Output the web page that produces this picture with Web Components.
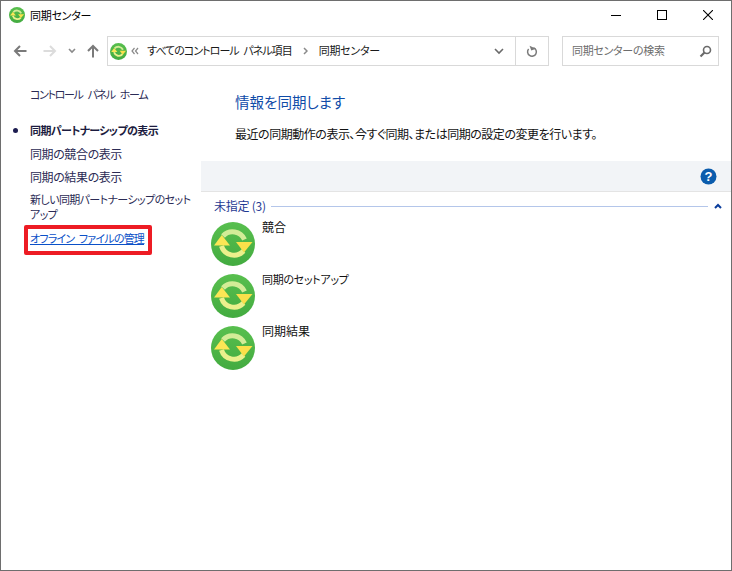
<!DOCTYPE html>
<html lang="ja">
<head>
<meta charset="utf-8">
<title>同期センター</title>
<style>
  html, body { margin: 0; height: 100%; background: #fff; overflow: hidden; }
  body { font: 12px "Noto Sans CJK JP", "Noto Sans", sans-serif; font-feature-settings: "palt"; color: #1a1a1a; }
</style>
</head>
<body>
<sync-window>
  <title-bar slot="title">同期センター</title-bar>
  <nav-bar slot="nav"></nav-bar>
  <side-panel slot="side">
    <side-link kind="home">コントロール パネル ホーム</side-link>
    <side-link kind="current">同期パートナーシップの表示</side-link>
    <side-link kind="mixed">同期の競合の表示</side-link>
    <side-link kind="mixed">同期の結果の表示</side-link>
    <side-link kind="long">新しい同期パートナーシップのセットアップ</side-link>
    <side-link kind="marked">オフライン ファイルの管理</side-link>
  </side-panel>
  <content-pane slot="main">
    <group-header>未指定 (3)</group-header>
    <sync-item>競合</sync-item>
    <sync-item tight>同期のセットアップ</sync-item>
    <sync-item>同期結果</sync-item>
  </content-pane>
</sync-window>

<script>
// small helper so each class stays short
function shadow(el, html) {
  el.attachShadow({ mode: 'open' }).innerHTML = html
}

let iconCount = 0

class SyncIcon extends HTMLElement {
  constructor() {
    super()
    const id = 'g' + (++iconCount)
    shadow(this, `
      <style>
        :host { display: block; width: var(--size, 16px); height: var(--size, 16px); flex: none; }
        svg { display: block; width: 100%; height: 100%; }
      </style>
      <svg viewBox="0 0 44 44">
        <defs>
          <linearGradient id="${id}" x1="0" y1="0" x2="0" y2="1">
            <stop offset="0" stop-color="#58bf4e"/>
            <stop offset="1" stop-color="#43ab40"/>
          </linearGradient>
        </defs>
        <circle cx="22" cy="22" r="22" fill="url(#${id})"/>
        <path d="M12 14 A13 13 0 0 1 33.5 17.5" fill="none" stroke="#d3ec97" stroke-width="5"/>
        <path d="M32.5 29 A13 13 0 0 1 10.5 24" fill="none" stroke="#ebf08c" stroke-width="5"/>
        <path d="M3 23.5 L10.8 13 L19 23.5 Z" fill="#fbe655"/>
        <path d="M25 20 L41.5 20 L33 30.5 Z" fill="#fbe04a"/>
      </svg>`)
  }
}
customElements.define('sync-icon', SyncIcon)

class SyncWindow extends HTMLElement {
  constructor() {
    super()
    shadow(this, `
      <style>
        :host { display: flex; flex-direction: column; box-sizing: border-box; width: 732px; height: 571px; border: 1px solid #6e6e6e; background: #fff; }
        .body { flex: 1; display: flex; min-height: 0; }
      </style>
      <slot name="title"></slot>
      <slot name="nav"></slot>
      <div class="body"><slot name="side"></slot><slot name="main"></slot></div>`)
  }
}
customElements.define('sync-window', SyncWindow)

class TitleBar extends HTMLElement {
  constructor() {
    super()
    shadow(this, `
      <style>
        :host { display: flex; align-items: center; height: 28px; padding-left: 8px; color: #000; }
        sync-icon { --size: 16px; margin-right: 5px; }
        .text { flex: 1; font-size: 11px; letter-spacing: -.25px; }
        .btn { width: 46px; height: 28px; display: flex; align-items: center; justify-content: center; }
        svg { display: block; }
      </style>
      <sync-icon></sync-icon>
      <span class="text"><slot></slot></span>
      <span class="btn"><svg width="10" height="10"><path d="M0 5.5H10" stroke="#000"/></svg></span>
      <span class="btn"><svg width="10" height="10"><rect x=".5" y=".5" width="9" height="9" fill="none" stroke="#000"/></svg></span>
      <span class="btn"><svg width="10" height="10"><path d="M0 0L10 10M10 0L0 10" stroke="#000" stroke-width="1.1"/></svg></span>`)
  }
}
customElements.define('title-bar', TitleBar)

class NavBar extends HTMLElement {
  constructor() {
    super()
    shadow(this, `
      <style>
        :host { display: flex; align-items: flex-start; height: 36px; margin-top: 7px; color: #1a1a1a; }
        svg { display: block; flex: none; }
        .arrows { display: flex; align-items: center; height: 30px; width: 106px; flex: none; }
        .arrows span { display: flex; justify-content: center; }
        .addr, .search { display: flex; align-items: center; box-sizing: border-box; height: 30px; border: 1px solid #d9d9d9; }
        .addr { width: 442px; flex: none; padding-left: 2px; }
        .addr sync-icon { --size: 17px; margin-right: 4px; }
        .path { flex: 1; display: flex; align-items: center; white-space: nowrap; padding: 0 0 2px 8px; font-size: 11px; }
        .path span:first-child { letter-spacing: -.95px; word-spacing: 3px; }
        .path span:last-child { letter-spacing: -.25px; }
        .path svg { margin: 2px 11px 0 11px; }
        .drop { width: 33px; height: 28px; display: flex; align-items: center; justify-content: center; }
        .refresh { width: 32px; height: 28px; border-left: 1px solid #d9d9d9; display: flex; align-items: center; justify-content: center; }
        .search { width: 157px; flex: none; margin-left: 13px; padding: 0 6px 0 9px; color: #6d6d6d; font-size: 11px; letter-spacing: -.3px; }
        .search span { flex: 1; padding-bottom: 2px; }
      </style>
      <div class="arrows">
        <span style="width:38px"><svg width="14" height="12"><path d="M7 1L2 6L7 11M2 6H13.5" fill="none" stroke="#7a7a7a" stroke-width="2"/></svg></span>
        <span style="width:22px"><svg width="14" height="12"><path d="M7 1L12 6L7 11M12 6H.5" fill="none" stroke="#dcdcdc" stroke-width="2"/></svg></span>
        <span style="width:22px"><svg width="8" height="6"><path d="M1 1L4 4L7 1" fill="none" stroke="#8a8a8a" stroke-width="1.6"/></svg></span>
        <span style="width:20px"><svg width="12" height="14"><path d="M1 7L6 2L11 7M6 2V13.5" fill="none" stroke="#7a7a7a" stroke-width="2"/></svg></span>
      </div>
      <div class="addr">
        <sync-icon></sync-icon>
        <svg width="8" height="8"><path d="M3.5 1L1 4L3.5 7M7 1L4.5 4L7 7" fill="none" stroke="#8a8a8a" stroke-width="1.2"/></svg>
        <div class="path">
          <span>すべてのコントロール パネル項目</span>
          <svg width="5" height="8"><path d="M1 1L4 4L1 7" fill="none" stroke="#8a8a8a" stroke-width="1.5"/></svg>
          <span>同期センター</span>
        </div>
        <span class="drop"><svg width="10" height="7"><path d="M1 1L5 5L9 1" fill="none" stroke="#6a6a6a" stroke-width="1.6"/></svg></span>
        <span class="refresh"><svg width="12" height="13" viewBox="0 0 12 13"><path d="M7.5 2.7A4.4 4.4 0 1 1 2.6 4" fill="none" stroke="#7a7a7a" stroke-width="1.5"/><path d="M4.5 0V5H9.5Z" fill="#7a7a7a" transform="rotate(-20 6 3)"/></svg></span>
      </div>
      <div class="search">
        <span>同期センターの検索</span>
        <svg width="13" height="13"><circle cx="8" cy="5" r="3.5" fill="none" stroke="#6a6a6a" stroke-width="1.6"/><path d="M5.5 7.5L1.5 11.5" stroke="#6a6a6a" stroke-width="2.2"/></svg>
      </div>`)
  }
}
customElements.define('nav-bar', NavBar)

class SidePanel extends HTMLElement {
  constructor() {
    super()
    shadow(this, `
      <style>
        :host { display: flex; flex-direction: column; box-sizing: border-box; width: 200px; flex: none; padding: 11px 8px 0 29px; }
      </style>
      <slot></slot>`)
  }
}
customElements.define('side-panel', SidePanel)

class SideLink extends HTMLElement {
  constructor() {
    super()
    shadow(this, `
      <style>
        :host { display: block; position: relative; color: #2b2b55; line-height: 15px; padding: 4px 0; font-size: 11px; }
        :host([kind="home"]) { margin-bottom: 13px; letter-spacing: -1.35px; word-spacing: 4px; }
        :host([kind="current"]) { font-weight: 700; color: #1c1c40; letter-spacing: -.6px; }
        :host([kind="current"])::before { content: ""; position: absolute; left: -17px; top: 9px; width: 5px; height: 5px; border-radius: 50%; background: #1c1c50; }
        :host([kind="mixed"]) { font-size: 12px; letter-spacing: -.4px; margin-bottom: -.5px; }
        :host([kind="long"]) { letter-spacing: -.6px; margin-top: 1px; }
        :host([kind="marked"]) { color: #0a50c8; text-decoration: underline; white-space: nowrap; letter-spacing: -.8px; word-spacing: 3px; margin-top: 1px; }
        :host([kind="marked"])::after { content: ""; position: absolute; left: -6px; top: -2px; width: 120px; height: 22px; border: 4px solid #ed1c24; border-radius: 2px; }
      </style>
      <slot></slot>`)
  }
}
customElements.define('side-link', SideLink)

class ContentPane extends HTMLElement {
  constructor() {
    super()
    shadow(this, `
      <style>
        :host { display: block; flex: 1; min-width: 0; }
        h1 { margin: 0; padding: 19px 0 0 34px; font-size: 14.5px; font-weight: 400; color: #0f4ba8; line-height: 22px; }
        p { margin: 0; padding: 12px 0 0 34px; line-height: 18px; color: #111; height: 36px; letter-spacing: -.47px; }
        .band { display: flex; justify-content: flex-end; align-items: center; box-sizing: border-box; height: 31px; padding-right: 14px; background: #f2f4f7; border-bottom: 1px solid #e4e4e4; }
        .list { display: flex; flex-direction: column; gap: 8px; padding: 0 0 0 10px; }
      </style>
      <h1>情報を同期します</h1>
      <p>最近の同期動作の表示、今すぐ同期、または同期の設定の変更を行います。</p>
      <div class="band">
        <svg width="17" height="17"><circle cx="8.5" cy="8.5" r="8" fill="#0b5cad"/><text x="8.5" y="13" text-anchor="middle" font-family="Liberation Sans" font-size="13" font-weight="700" fill="#fff">?</text></svg>
      </div>
      <div class="list"><slot></slot></div>`)
  }
}
customElements.define('content-pane', ContentPane)

class GroupHeader extends HTMLElement {
  constructor() {
    super()
    shadow(this, `
      <style>
        :host { display: flex; align-items: center; height: 28px; margin: 0 0 -6px 3px; color: #1f3a93; letter-spacing: -.25px; }
        .text { padding-bottom: 2px; }
        .line { flex: 1; height: 1px; background: #b4c6ea; margin: 0 6px 0 5px; }
        svg { margin-right: 9px; }
      </style>
      <span class="text"><slot></slot></span>
      <span class="line"></span>
      <svg width="8" height="6"><path d="M1 5L4 2L7 5" fill="none" stroke="#0a3d9c" stroke-width="2"/></svg>`)
  }
}
customElements.define('group-header', GroupHeader)

class SyncItem extends HTMLElement {
  constructor() {
    super()
    shadow(this, `
      <style>
        :host { display: flex; align-items: flex-start; height: 44px; color: #111; line-height: 12px; }
        :host([tight]) { font-size: 11px; letter-spacing: -.3px; }
        sync-icon { --size: 44px; margin-right: 7px; }
        span { margin-top: -1px; }
      </style>
      <sync-icon></sync-icon>
      <span><slot></slot></span>`)
  }
}
customElements.define('sync-item', SyncItem)
</script>
</body>
</html>
